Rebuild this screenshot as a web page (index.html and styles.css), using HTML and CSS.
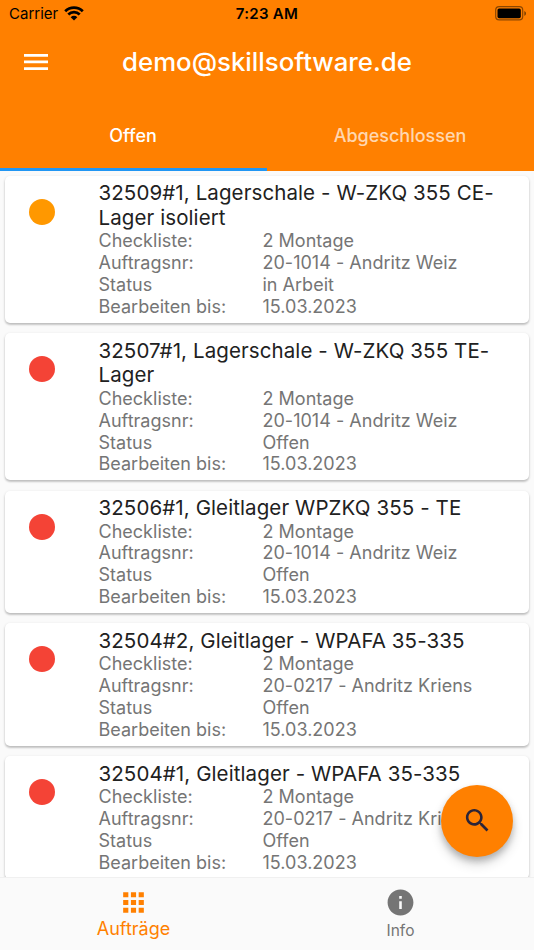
FILE: index.html
```html
<!DOCTYPE html>
<html lang="de">
<head>
  <meta charset="UTF-8">
  <meta name="viewport" content="width=device-width, initial-scale=1.0">
  <title>Aufträge</title>
  <link rel="stylesheet" href="styles.css">
</head>
<body>
  <header>
    <div class="status-bar">
      <div class="carrier">
        <span>Carrier</span>
        <svg class="wifi" viewBox="0 0 20 15">
          <path d="M1.2 5.2a12.4 12.4 0 0 1 17.6 0M4.3 8.5a8 8 0 0 1 11.4 0" fill="none" stroke="#000" stroke-width="2.7"/>
          <path d="M10 14.6 6.7 11.2a4.7 4.7 0 0 1 6.6 0z"/>
        </svg>
      </div>
      <div class="time">7:23 AM</div>
      <svg class="battery" viewBox="0 0 32 15">
        <rect x="0.7" y="0.7" width="27" height="13.2" rx="3.4" fill="none" stroke="#000" stroke-opacity="0.45" stroke-width="1.2"/>
        <rect x="2.5" y="2.5" width="23.3" height="9.7" rx="1.6"/>
        <path d="M29.3 5v4.8c1-.4 1.7-1.3 1.7-2.4s-.7-2-1.7-2.4z" opacity="0.5"/>
      </svg>
    </div>
    <div class="app-bar">
      <svg class="menu-icon" viewBox="0 0 24 16">
        <path d="M0 0h24v2.7H0zM0 6.6h24v2.7H0zM0 13.3h24V16H0z" fill="#fff"/>
      </svg>
      <h1>demo@skillsoftware.de</h1>
    </div>
    <nav class="tabs">
      <a class="tab active">Offen</a>
      <a class="tab">Abgeschlossen</a>
    </nav>
  </header>

  <main>
    <div class="card">
      <span class="dot orange"></span>
      <div class="card-content">
        <h2>32509#1, Lagerschale - W-ZKQ 355 CE-<br>Lager isoliert</h2>
        <dl>
          <dt>Checkliste:</dt><dd>2 Montage</dd>
          <dt>Auftragsnr:</dt><dd>20-1014 - Andritz Weiz</dd>
          <dt>Status</dt><dd>in Arbeit</dd>
          <dt>Bearbeiten bis:</dt><dd>15.03.2023</dd>
        </dl>
      </div>
    </div>

    <div class="card">
      <span class="dot"></span>
      <div class="card-content">
        <h2>32507#1, Lagerschale - W-ZKQ 355 TE-<br>Lager</h2>
        <dl>
          <dt>Checkliste:</dt><dd>2 Montage</dd>
          <dt>Auftragsnr:</dt><dd>20-1014 - Andritz Weiz</dd>
          <dt>Status</dt><dd>Offen</dd>
          <dt>Bearbeiten bis:</dt><dd>15.03.2023</dd>
        </dl>
      </div>
    </div>

    <div class="card">
      <span class="dot"></span>
      <div class="card-content">
        <h2>32506#1, Gleitlager WPZKQ 355 - TE</h2>
        <dl>
          <dt>Checkliste:</dt><dd>2 Montage</dd>
          <dt>Auftragsnr:</dt><dd>20-1014 - Andritz Weiz</dd>
          <dt>Status</dt><dd>Offen</dd>
          <dt>Bearbeiten bis:</dt><dd>15.03.2023</dd>
        </dl>
      </div>
    </div>

    <div class="card">
      <span class="dot"></span>
      <div class="card-content">
        <h2>32504#2, Gleitlager - WPAFA 35-335</h2>
        <dl>
          <dt>Checkliste:</dt><dd>2 Montage</dd>
          <dt>Auftragsnr:</dt><dd>20-0217 - Andritz Kriens</dd>
          <dt>Status</dt><dd>Offen</dd>
          <dt>Bearbeiten bis:</dt><dd>15.03.2023</dd>
        </dl>
      </div>
    </div>

    <div class="card">
      <span class="dot"></span>
      <div class="card-content">
        <h2>32504#1, Gleitlager - WPAFA 35-335</h2>
        <dl>
          <dt>Checkliste:</dt><dd>2 Montage</dd>
          <dt>Auftragsnr:</dt><dd>20-0217 - Andritz Kriens</dd>
          <dt>Status</dt><dd>Offen</dd>
          <dt>Bearbeiten bis:</dt><dd>15.03.2023</dd>
        </dl>
      </div>
    </div>
  </main>

  <button class="fab" aria-label="Suchen">
    <svg viewBox="0 0 24 24">
      <path fill="#2b2438" d="M15.5 14h-.79l-.28-.27C15.41 12.59 16 11.11 16 9.5 16 5.91 13.09 3 9.5 3S3 5.91 3 9.5 5.91 16 9.5 16c1.61 0 3.09-.59 4.23-1.57l.27.28v.79l5 4.99L20.49 19l-4.99-5zm-6 0C7.01 14 5 11.99 5 9.5S7.01 5 9.5 5 14 7.01 14 9.5 11.99 14 9.5 14z"/>
    </svg>
  </button>

  <footer>
    <a class="nav-item active">
      <svg viewBox="0 0 24 24">
        <path d="M4 8h4V4H4v4zm6 12h4v-4h-4v4zm-6 0h4v-4H4v4zm0-6h4v-4H4v4zm6 0h4v-4h-4v4zm6-10v4h4V4h-4zm-6 4h4V4h-4v4zm6 6h4v-4h-4v4zm0 6h4v-4h-4v4z"/>
      </svg>
      <span>Aufträge</span>
    </a>
    <a class="nav-item">
      <svg viewBox="0 0 24 24">
        <path d="M12 2C6.48 2 2 6.48 2 12s4.48 10 10 10 10-4.480 10-10S17.520 2 12 2zm1 15h-2v-6h2v6zm0-8h-2V7h2v2z"/>
      </svg>
      <span>Info</span>
    </a>
  </footer>
</body>
</html>
```
FILE: styles.css
```css
* {
  box-sizing: border-box;
}

body {
  margin: 0;
  height: 950px;
  display: flex;
  flex-direction: column;
  overflow: hidden;
  font-family: Inter, "Liberation Sans", sans-serif;
  background-color: #fafafa;
}

header {
  flex: none;
  height: 170.5px;
  background-color: #ff8000;
}

.status-bar {
  display: grid;
  grid-template-columns: 1fr auto 1fr;
  align-items: center;
  height: 27px;
  padding: 0 7px 0 9px;
  font-size: 15px;
  color: #000;
}

.carrier {
  display: flex;
  align-items: center;
  gap: 6px;
}

.wifi {
  width: 20px;
  height: 15px;
}

.time {
  padding-right: 2px;
  font-weight: 600;
  letter-spacing: 0.3px;
}

.battery {
  width: 32px;
  height: 15px;
  justify-self: end;
}

.app-bar {
  display: grid;
  grid-template-columns: 97px 1fr 97px;
  align-items: center;
  height: 70px;
  color: #fff;
}

.menu-icon {
  width: 24px;
  height: 16px;
  margin-left: 24px;
}

h1 {
  margin: 0;
  padding-bottom: 1px;
  text-align: center;
  font-size: 25.8px;
  font-weight: 500;
}

.tabs {
  display: flex;
  height: 73.5px;
}

.tab {
  flex: 1;
  display: flex;
  align-items: center;
  justify-content: center;
  padding: 6px 1px 0 0;
  border-bottom: 3px solid transparent;
  font-size: 18px;
  font-weight: 500;
  color: rgba(255, 255, 255, 0.7);
}

.tab.active {
  color: #fff;
  border-bottom-color: #2196f3;
}

main {
  flex: 1;
  min-height: 0;
  display: flex;
  flex-direction: column;
  gap: 10.3px;
  padding: 5.3px 5.2px 0;
  overflow: hidden;
}

.card {
  flex: none;
  display: flex;
  padding: 5.5px 0 5px 23.4px;
  background-color: #fff;
  border-radius: 5px;
  box-shadow: 0 1px 3px rgba(0, 0, 0, 0.16), 0 2px 2px rgba(0, 0, 0, 0.14);
}

.dot {
  width: 26px;
  height: 26px;
  margin: 17.5px 43.9px 0 0;
  border-radius: 50%;
  background-color: #f44336;
}

.dot.orange {
  background-color: #ff9800;
}

h2 {
  margin: 0;
  font-size: 20.5px;
  font-weight: 400;
  line-height: 24.6px;
  letter-spacing: 0.1px;
  color: #212121;
}

dl {
  display: grid;
  grid-template-columns: 164px auto;
  margin: -0.2px 0 0;
  font-size: 18px;
  line-height: 21.9px;
  letter-spacing: 0.02px;
  color: #757575;
}

dd {
  margin: 0;
}

.fab {
  position: absolute;
  right: 21px;
  bottom: 93.5px;
  display: flex;
  align-items: center;
  justify-content: center;
  width: 72px;
  height: 72px;
  padding: 0;
  border: none;
  border-radius: 50%;
  background-color: #ff8000;
  box-shadow: 0 4px 6px rgba(0, 0, 0, 0.2), 0 7px 12px rgba(0, 0, 0, 0.16);
}

.fab svg {
  width: 31px;
  height: 31px;
}

footer {
  flex: none;
  display: flex;
  height: 73px;
  border-top: 1px solid #f0f0f0;
  background-color: #fafafa;
}

.nav-item {
  flex: 1;
  display: flex;
  flex-direction: column;
  align-items: center;
  padding-top: 9px;
  font-size: 15.5px;
  color: #757575;
}

.nav-item svg {
  width: 31px;
  height: 31px;
  fill: currentColor;
}

.nav-item span {
  margin-top: 2.6px;
}

.nav-item.active {
  font-size: 18px;
  color: #ff8000;
}

.nav-item.active span {
  margin-top: 0;
}
```
